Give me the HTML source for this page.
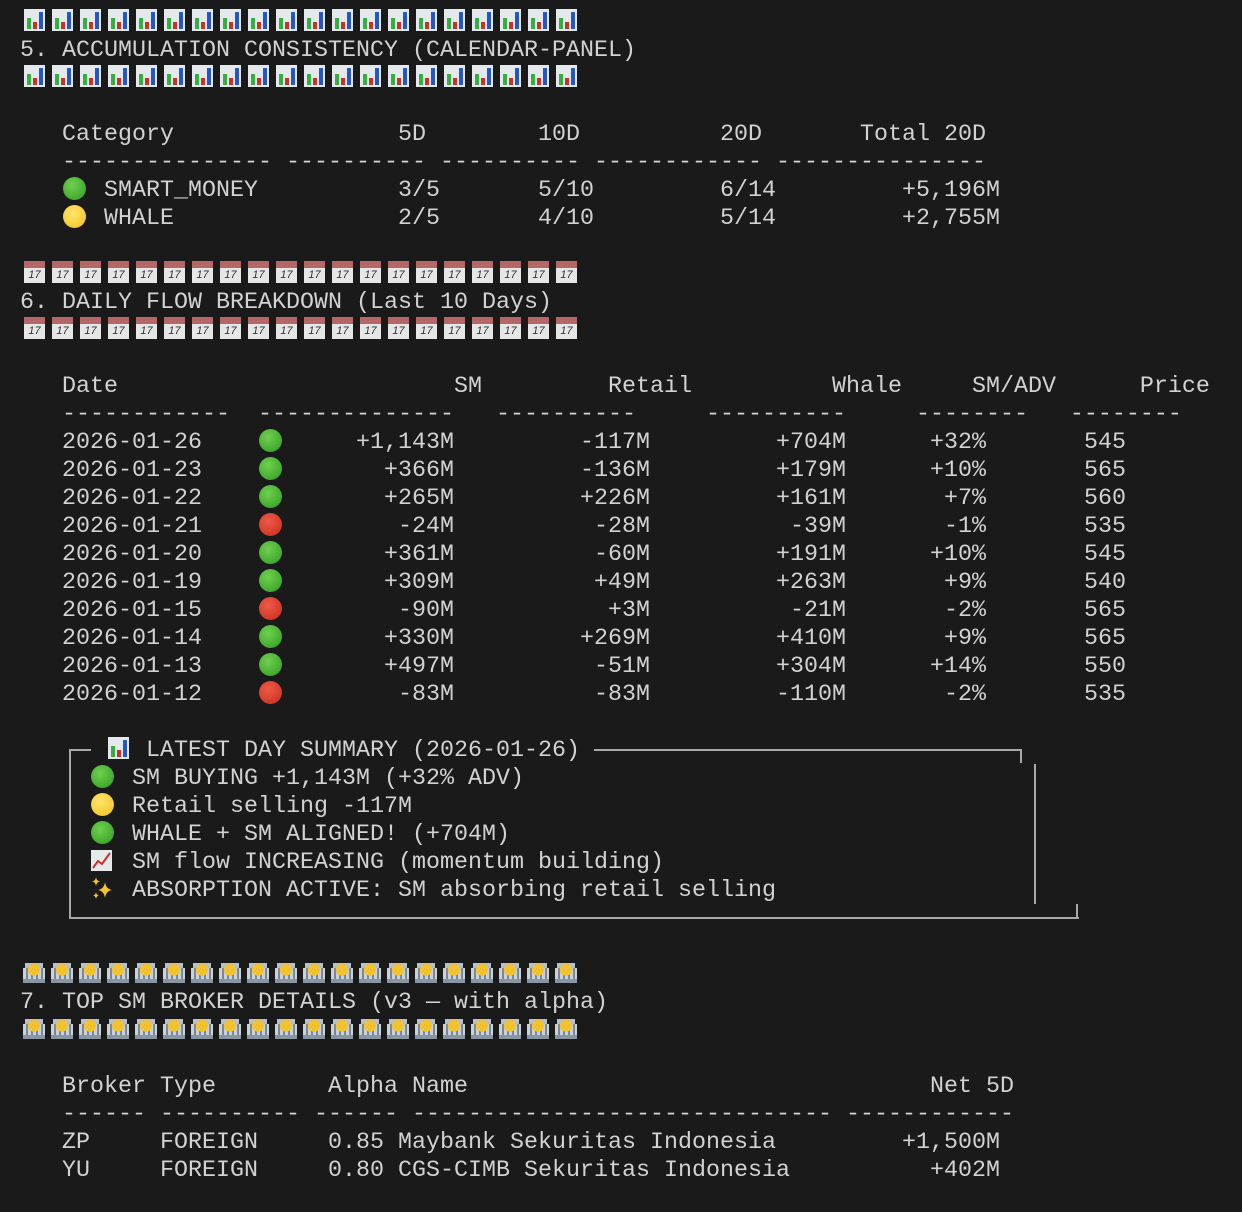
<!DOCTYPE html>
<html><head><meta charset="utf-8"><style>
body{margin:0;background:#1a1a1a;width:1242px;height:1212px;overflow:hidden;position:relative;font-family:"Liberation Mono",monospace;font-size:23.33px;color:#d2d2d2}
.l{position:absolute;left:20px;height:28px;line-height:28px;white-space:pre;margin-top:3px}
.l.em{margin-top:0}
.e{display:inline-block;width:28px;height:28px;vertical-align:top;position:relative}
.ch{display:inline-block;width:21px;height:22px;margin:3px 3px 3px 4px;vertical-align:top;background:linear-gradient(#35b03d,#35b03d) 3px 9px/4px 11px no-repeat,linear-gradient(#c8322c,#c8322c) 9px 13px/4px 7px no-repeat,linear-gradient(#2457c4,#2457c4) 15px 3px/4px 17px no-repeat,#e4e9ee}
.cal{display:inline-block;width:21px;height:22px;margin:3px 3px 3px 4px;vertical-align:top;background:linear-gradient(#b56666,#b56666) 0 0/100% 7px no-repeat,#e6e6e6;font-size:11px;line-height:13px;color:#333;text-align:center;padding-top:8px;box-sizing:border-box;font-family:"Liberation Sans",sans-serif}
.bk{display:inline-block;width:22px;height:22px;margin:3px 3px 3px 3px;vertical-align:top;background:radial-gradient(circle at 50% 40%,#f2c12e 5.5px,transparent 6.5px),linear-gradient(#8a96a3,#8a96a3) 0 18px/100% 4px no-repeat,repeating-linear-gradient(90deg,#c9d1d9 0 3px,#7d8894 3px 5px) 0 7px/100% 11px no-repeat,linear-gradient(#b5bec8,#b5bec8) 2px 2px/18px 6px no-repeat}
.o{position:absolute;width:23px;height:23px;border-radius:50%;top:0px;left:1px}
.g{background:radial-gradient(circle at 40% 35%,#6fd04e,#2f9a22)}
.y{background:radial-gradient(circle at 40% 35%,#ffe56a,#f0c020)}
.r{background:radial-gradient(circle at 40% 35%,#f05a48,#c52a1c)}
.ln{position:absolute;background:#a8a8a8}
</style></head><body>
<div class="l em" style="top:6px"><i class=ch></i><i class=ch></i><i class=ch></i><i class=ch></i><i class=ch></i><i class=ch></i><i class=ch></i><i class=ch></i><i class=ch></i><i class=ch></i><i class=ch></i><i class=ch></i><i class=ch></i><i class=ch></i><i class=ch></i><i class=ch></i><i class=ch></i><i class=ch></i><i class=ch></i><i class=ch></i></div>
<div class="l" style="top:34px">5. ACCUMULATION CONSISTENCY (CALENDAR-PANEL)</div>
<div class="l em" style="top:62px"><i class=ch></i><i class=ch></i><i class=ch></i><i class=ch></i><i class=ch></i><i class=ch></i><i class=ch></i><i class=ch></i><i class=ch></i><i class=ch></i><i class=ch></i><i class=ch></i><i class=ch></i><i class=ch></i><i class=ch></i><i class=ch></i><i class=ch></i><i class=ch></i><i class=ch></i><i class=ch></i></div>

<div class="l" style="top:118px">   Category                5D        10D          20D       Total 20D</div>
<div class="l" style="top:146px">   --------------- ---------- ---------- ------------ ---------------</div>
<div class="l" style="top:174px">   <span class=e><b class="o g"></b></span> SMART_MONEY          3/5       5/10         6/14         +5,196M</div>
<div class="l" style="top:202px">   <span class=e><b class="o y"></b></span> WHALE                2/5       4/10         5/14         +2,755M</div>

<div class="l em" style="top:258px"><i class=cal>17</i><i class=cal>17</i><i class=cal>17</i><i class=cal>17</i><i class=cal>17</i><i class=cal>17</i><i class=cal>17</i><i class=cal>17</i><i class=cal>17</i><i class=cal>17</i><i class=cal>17</i><i class=cal>17</i><i class=cal>17</i><i class=cal>17</i><i class=cal>17</i><i class=cal>17</i><i class=cal>17</i><i class=cal>17</i><i class=cal>17</i><i class=cal>17</i></div>
<div class="l" style="top:286px">6. DAILY FLOW BREAKDOWN (Last 10 Days)</div>
<div class="l em" style="top:314px"><i class=cal>17</i><i class=cal>17</i><i class=cal>17</i><i class=cal>17</i><i class=cal>17</i><i class=cal>17</i><i class=cal>17</i><i class=cal>17</i><i class=cal>17</i><i class=cal>17</i><i class=cal>17</i><i class=cal>17</i><i class=cal>17</i><i class=cal>17</i><i class=cal>17</i><i class=cal>17</i><i class=cal>17</i><i class=cal>17</i><i class=cal>17</i><i class=cal>17</i></div>

<div class="l" style="top:370px">   Date                        SM         Retail          Whale     SM/ADV      Price</div>
<div class="l" style="top:398px">   ------------  --------------   ----------     ----------     --------   --------</div>
<div class="l" style="top:426px">   2026-01-26    <span class=e><b class="o g"></b></span>     +1,143M         -117M         +704M      +32%       545</div>
<div class="l" style="top:454px">   2026-01-23    <span class=e><b class="o g"></b></span>       +366M         -136M         +179M      +10%       565</div>
<div class="l" style="top:482px">   2026-01-22    <span class=e><b class="o g"></b></span>       +265M         +226M         +161M       +7%       560</div>
<div class="l" style="top:510px">   2026-01-21    <span class=e><b class="o r"></b></span>        -24M          -28M          -39M       -1%       535</div>
<div class="l" style="top:538px">   2026-01-20    <span class=e><b class="o g"></b></span>       +361M          -60M         +191M      +10%       545</div>
<div class="l" style="top:566px">   2026-01-19    <span class=e><b class="o g"></b></span>       +309M          +49M         +263M       +9%       540</div>
<div class="l" style="top:594px">   2026-01-15    <span class=e><b class="o r"></b></span>        -90M           +3M          -21M       -2%       565</div>
<div class="l" style="top:622px">   2026-01-14    <span class=e><b class="o g"></b></span>       +330M         +269M         +410M       +9%       565</div>
<div class="l" style="top:650px">   2026-01-13    <span class=e><b class="o g"></b></span>       +497M          -51M         +304M      +14%       550</div>
<div class="l" style="top:678px">   2026-01-12    <span class=e><b class="o r"></b></span>        -83M          -83M         -110M       -2%       535</div>

<div class="ln" style="left:69px;top:749px;width:22px;height:2px"></div>
<div class="ln" style="left:594px;top:749px;width:428px;height:2px"></div>
<div class="ln" style="left:1020px;top:749px;width:2px;height:14px"></div>
<div class="ln" style="left:69px;top:749px;width:2px;height:170px"></div>
<div class="ln" style="left:1034px;top:764px;width:2px;height:140px"></div>
<div class="ln" style="left:69px;top:917px;width:1010px;height:2px"></div>
<div class="ln" style="left:1076px;top:904px;width:2px;height:15px"></div>
<div class="l" style="top:734px">      <i class=ch style="margin-top:0"></i> LATEST DAY SUMMARY (2026-01-26)</div>
<div class="l" style="top:762px">     <span class=e><b class="o g"></b></span> SM BUYING +1,143M (+32% ADV)</div>
<div class="l" style="top:790px">     <span class=e><b class="o y"></b></span> Retail selling -117M</div>
<div class="l" style="top:818px">     <span class=e><b class="o g"></b></span> WHALE + SM ALIGNED! (+704M)</div>
<div class="l" style="top:846px">     <span class=e><svg width="24" height="24" style="position:absolute;left:0;top:0"><rect x="1" y="1" width="21" height="21" fill="#e6e9ec"/><path d="M3 19 L8 12 L12 15 L20 4" stroke="#d42a2a" stroke-width="2" fill="none"/></svg></span> SM flow INCREASING (momentum building)</div>
<div class="l" style="top:874px">     <span class=e><svg width="26" height="26" style="position:absolute;left:0;top:-1px"><path d="M15 6 Q16 13 22 14 Q16 15 15 22 Q14 15 8 14 Q14 13 15 6Z" fill="#f5c22a"/><path d="M6 1 Q6.5 5 10 5.5 Q6.5 6 6 10 Q5.5 6 2 5.5 Q5.5 5 6 1Z" fill="#f5c22a"/><path d="M6 16 Q6.4 19 9 19.5 Q6.4 20 6 23 Q5.6 20 3 19.5 Q5.6 19 6 16Z" fill="#f5c22a"/></svg></span> ABSORPTION ACTIVE: SM absorbing retail selling</div>

<div class="l em" style="top:958px"><i class=bk></i><i class=bk></i><i class=bk></i><i class=bk></i><i class=bk></i><i class=bk></i><i class=bk></i><i class=bk></i><i class=bk></i><i class=bk></i><i class=bk></i><i class=bk></i><i class=bk></i><i class=bk></i><i class=bk></i><i class=bk></i><i class=bk></i><i class=bk></i><i class=bk></i><i class=bk></i></div>
<div class="l" style="top:986px">7. TOP SM BROKER DETAILS (v3 — with alpha)</div>
<div class="l em" style="top:1014px"><i class=bk></i><i class=bk></i><i class=bk></i><i class=bk></i><i class=bk></i><i class=bk></i><i class=bk></i><i class=bk></i><i class=bk></i><i class=bk></i><i class=bk></i><i class=bk></i><i class=bk></i><i class=bk></i><i class=bk></i><i class=bk></i><i class=bk></i><i class=bk></i><i class=bk></i><i class=bk></i></div>

<div class="l" style="top:1070px">   Broker Type        Alpha Name                                 Net 5D</div>
<div class="l" style="top:1098px">   ------ ---------- ------ ------------------------------ ------------</div>
<div class="l" style="top:1126px">   ZP     FOREIGN     0.85 Maybank Sekuritas Indonesia         +1,500M</div>
<div class="l" style="top:1154px">   YU     FOREIGN     0.80 CGS-CIMB Sekuritas Indonesia          +402M</div>
</body></html>
